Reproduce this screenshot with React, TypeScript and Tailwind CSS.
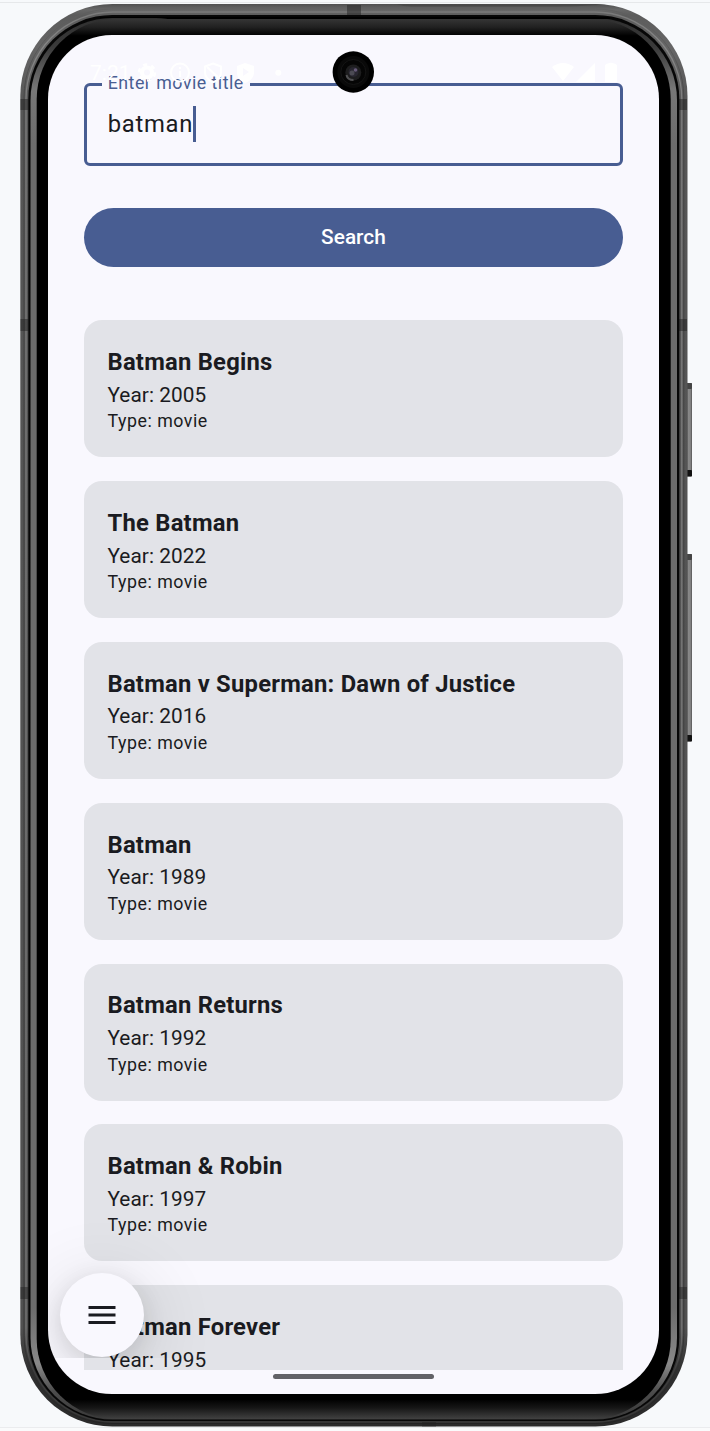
const movies = [
  { title: "Batman Begins", year: 2005 },
  { title: "The Batman", year: 2022 },
  { title: "Batman v Superman: Dawn of Justice", year: 2016 },
  { title: "Batman", year: 1989 },
  { title: "Batman Returns", year: 1992 },
  { title: "Batman & Robin", year: 1997 },
  { title: "Batman Forever", year: 1995 },
];

function DeviceFrame() {
  return (
    <svg className="absolute inset-0" width="710" height="1431" viewBox="0 0 710 1431" aria-hidden="true">
      <defs>
        <linearGradient id="shell" gradientUnits="userSpaceOnUse" x1="0" y1="4" x2="0" y2="1427">
          <stop offset="0" stopColor="#505050" />
          <stop offset="0.004" stopColor="#686868" />
          <stop offset="0.008" stopColor="#5c5c5c" />
          <stop offset="0.03" stopColor="#666" />
          <stop offset="0.07" stopColor="#565656" />
          <stop offset="0.93" stopColor="#505050" />
          <stop offset="0.96" stopColor="#303030" />
          <stop offset="1" stopColor="#2a2a2a" />
        </linearGradient>
        <linearGradient id="groove" gradientUnits="userSpaceOnUse" x1="0" y1="4" x2="0" y2="1427">
          <stop offset="0" stopColor="#606060" />
          <stop offset="0.03" stopColor="#5a5a5a" />
          <stop offset="0.07" stopColor="#444" />
          <stop offset="0.93" stopColor="#383838" />
          <stop offset="1" stopColor="#222" />
        </linearGradient>
        <linearGradient id="glint" gradientUnits="userSpaceOnUse" x1="0" y1="4" x2="0" y2="1427">
          <stop offset="0" stopColor="#777" />
          <stop offset="0.03" stopColor="#868686" />
          <stop offset="0.07" stopColor="#7c7c7c" />
          <stop offset="0.93" stopColor="#747474" />
          <stop offset="0.96" stopColor="#3e3e3e" />
          <stop offset="1" stopColor="#383838" />
        </linearGradient>
        <linearGradient id="rim" gradientUnits="userSpaceOnUse" x1="0" y1="19" x2="0" y2="1420">
          <stop offset="0" stopColor="#303030" />
          <stop offset="0.02" stopColor="#3a3a3a" />
          <stop offset="0.05" stopColor="#777" />
          <stop offset="0.09" stopColor="#6c6c6c" />
          <stop offset="0.92" stopColor="#6c6c6c" />
          <stop offset="0.96" stopColor="#888" />
          <stop offset="0.98" stopColor="#4c4c4c" />
          <stop offset="1" stopColor="#383838" />
        </linearGradient>
        <linearGradient id="bezel" gradientUnits="userSpaceOnUse" x1="0" y1="19" x2="0" y2="1419">
          <stop offset="0" stopColor="#353535" />
          <stop offset="0.006" stopColor="#202020" />
          <stop offset="0.012" stopColor="#000" />
          <stop offset="0.986" stopColor="#000" />
          <stop offset="0.992" stopColor="#161616" />
          <stop offset="1" stopColor="#414141" />
        </linearGradient>
        <linearGradient id="key" x1="0" y1="0" x2="1" y2="0">
          <stop offset="0" stopColor="#444" />
          <stop offset="0.4" stopColor="#888" />
          <stop offset="0.8" stopColor="#808080" />
          <stop offset="1" stopColor="#505050" />
        </linearGradient>
      </defs>
      <path d="M0 2.5H710" stroke="#e6e8ea" />
      <path d="M0 1427.5H710" stroke="#ebecee" />
      <rect x="0" y="1428" width="710" height="3" fill="#fafbfc" />
      <rect x="686" y="383" width="6" height="93.500" rx="1" fill="url(#key)" />
      <rect x="686" y="383" width="6" height="6" rx="1" fill="#444" />
      <rect x="686" y="470" width="6" height="6.500" rx="1" fill="#111" />
      <rect x="686" y="554" width="6" height="187.500" rx="1" fill="url(#key)" />
      <rect x="686" y="554" width="6" height="6" rx="1" fill="#444" />
      <rect x="686" y="735" width="6" height="6.500" rx="1" fill="#111" />
      <rect x="20.300" y="4" width="667.200" height="1422.600" rx="92" fill="url(#shell)" />
      <rect x="24" y="9" width="659.800" height="1414.500" rx="88" fill="none" stroke="url(#groove)" strokeWidth="1" />
      <rect x="26" y="12" width="655.800" height="1410" rx="87" fill="none" stroke="url(#glint)" strokeWidth="1.300" />
      <path d="M396 4.300H606Q586 6.500 546 6.500H412Q404 6.500 396 4.300Z" fill="#4a4a4a" />
      <g fill="#222" fillOpacity="0.5">
        <rect x="347" y="5" width="14" height="10" />
        <rect x="422" y="1422" width="14" height="4.500" />
        <rect x="20.500" y="99" width="8" height="11" />
        <rect x="679" y="99" width="8" height="11" />
        <rect x="20.500" y="319" width="8" height="12" />
        <rect x="679" y="319" width="8" height="12" />
        <rect x="20.500" y="1287" width="8" height="12" />
        <rect x="679" y="1287" width="8" height="12" />
      </g>
      <rect x="28.300" y="15" width="651" height="1406" rx="84" fill="#070707" />
      <rect x="30.500" y="18" width="646.500" height="1401.500" rx="82" fill="url(#rim)" />
      <path d="M100 17H610V19H555Q545 19 540 19.500H170Q163 18 150 17.800H100Z" fill="#000" />
      <rect x="36.700" y="19" width="634" height="1400" rx="80" fill="url(#bezel)" />
    </svg>
  );
}

function StatusBar() {
  return (
    <div className="pointer-events-none absolute inset-x-0 top-0 z-10 h-[48px] text-white">
      <span className="absolute left-[42px] top-[26px] text-[21px] leading-[24px]">7:21</span>
      <svg className="absolute left-0 top-0" width="611" height="48" viewBox="48 35 611 48" fill="none" stroke="#fff" aria-hidden="true">
        <circle cx="147" cy="72.500" r="5" strokeWidth="4" />
        <circle cx="147" cy="72.500" r="8" strokeWidth="2.500" strokeDasharray="4.200 4.178" />
        <circle cx="180" cy="72.500" r="9" strokeWidth="2" />
        <path d="M180 71v6M180 67v2" strokeWidth="2" />
        <path d="M213 63.500l8 3v6c0 5-4 8-8 10-4-2-8-5-8-10v-6z" strokeWidth="2" />
        <path d="M207 67l13 12" strokeWidth="2" />
        <path d="M245 63l9 3v6c0 6-4 9-9 11-5-2-8-5-8-11v-6z" fill="#fff" stroke="none" />
        <path d="M243 68v8l6-4z" fill="#f9f8fe" stroke="none" />
        <circle cx="278.300" cy="72.700" r="3" fill="#fff" stroke="none" />
        <path d="M552 67q11-8 22 0l-11 14z" fill="#fff" stroke="none" />
        <path d="M576 82l19-19v19z" fill="#fff" stroke="none" />
        <path d="M605 82V66q0-2 3-2.500 3-1.500 6 0 3 .5 3 2.500v16z" fill="#fff" stroke="none" />
      </svg>
    </div>
  );
}

function Camera() {
  return (
    <svg className="absolute left-[284px] top-[16px] z-20" width="42" height="42" viewBox="0 0 42 42" aria-hidden="true">
      <circle cx="21.300" cy="21" r="20.700" fill="#000" />
      <circle cx="21.300" cy="21" r="16" fill="#090909" />
      <circle cx="21.300" cy="21" r="12.500" fill="#050505" stroke="#141414" />
      <circle cx="21.300" cy="21.500" r="8" fill="#1d1d1e" />
      <path d="M14.500 24q1 5 7 5" stroke="#505052" strokeWidth="2" fill="none" />
      <circle cx="21.500" cy="21" r="5" fill="#282630" />
      <circle cx="20" cy="22" r="2.500" fill="#4b4a53" />
      <circle cx="23.500" cy="19" r="1.800" fill="#665a78" />
    </svg>
  );
}

function MovieCard({ title, year }: { title: string; year: number }) {
  return (
    <article className="h-[137px] shrink-0 rounded-[18px] bg-[#e2e3e8] px-[23.800px] pt-[24.800px] text-[#1a1b21]">
      <h2 className="text-[23.800px] font-bold leading-[35.700px] tracking-[0.230px]">{title}</h2>
      <p className="text-[20.800px] leading-[29.700px] tracking-[0.060px]">Year: {year}</p>
      <p className="-mt-[1.200px] text-[17.800px] leading-[23.800px] tracking-[0.520px]">Type: movie</p>
    </article>
  );
}

export default function App() {
  return (
    <div className="relative h-[1431px] w-[710px] overflow-hidden bg-[#f7f9fb] pl-[48px] pt-[35px] font-['Roboto',sans-serif]">
      <DeviceFrame />
      <div className="relative flex h-[1359px] w-[611px] flex-col overflow-hidden rounded-[64px] bg-[#f9f8fe]">
        <StatusBar />
        <Camera />

        <main className="flex h-[1335px] shrink-0 flex-col overflow-hidden px-[35.700px] pt-[47.500px]">
          <div className="relative flex h-[83px] w-[539.500px] shrink-0 items-center rounded-[6px] border-[3px] border-[#485d92] pl-[21px]">
            <label className="absolute left-[15px] top-[-15px] bg-[#f9f8fe] px-[6px] text-[17.800px] leading-[24px] tracking-[0.490px] text-[#485d92]">
              Enter movie title
            </label>
            <span className="text-[23.800px] leading-[36px] tracking-[0.740px] text-[#1a1b21]">batman</span>
            <span className="h-[36px] w-[3px] bg-[#485d92]" />
          </div>

          <button className="mt-[42.500px] h-[59px] w-[539.500px] shrink-0 rounded-full bg-[#485d92] pt-[1px] text-[20.800px] font-medium tracking-[0.020px] text-white">
            Search
          </button>

          <div className="mt-[53.300px] flex w-[539.500px] flex-col gap-[23.830px]">
            {movies.map((movie) => (
              <MovieCard key={movie.title} title={movie.title} year={movie.year} />
            ))}
          </div>
        </main>

        <div className="flex justify-center pt-[3.500px]">
          <div className="h-[5.500px] w-[161px] rounded-full bg-[#626267]" />
        </div>

        <div className="pointer-events-none absolute left-0 top-[1140px] h-[183px] w-[240px] overflow-hidden">
          <button
            aria-label="Menu"
            className="absolute left-[12px] top-[98px] flex h-[83.500px] w-[83.500px] items-center justify-center rounded-full bg-[#f9f8fe] shadow-[0_6px_24px_0_rgba(0,0,0,0.12),0_12px_70px_12px_rgba(0,0,0,0.09)]"
          >
            <svg width="28" height="20" viewBox="0 0 28 20" fill="none" stroke="#1a1b21" strokeWidth="3" aria-hidden="true">
              <path d="M.500 2.500h27M.500 10h27M.500 17.500h27" />
            </svg>
          </button>
        </div>
      </div>
    </div>
  );
}
